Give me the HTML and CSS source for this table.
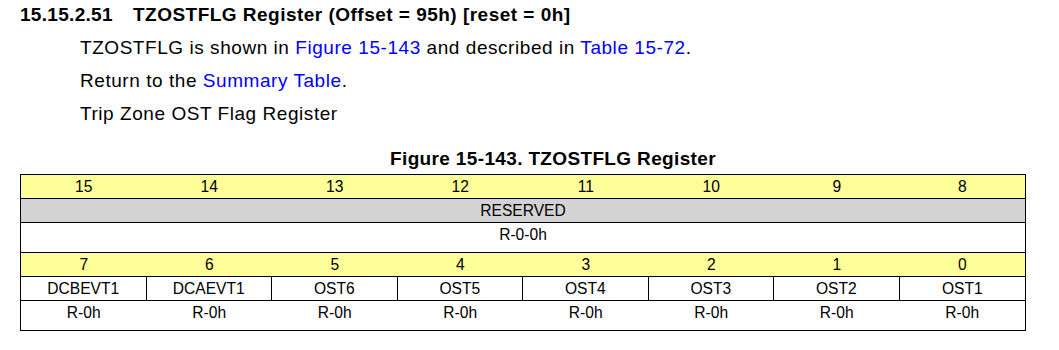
FILE: index.html
```
<!DOCTYPE html>
<html>
<head>
<meta charset="utf-8">
<link rel="stylesheet" href="styles.css">
</head>
<body>
<div class="doc">
  <h2 class="heading"><span class="secnum">15.15.2.51</span><span class="sectitle">TZOSTFLG Register (Offset = 95h) [reset = 0h]</span></h2>
  <div class="content">
    <p class="line">TZOSTFLG is shown in <a class="link">Figure 15-143</a> and described in <a class="link">Table 15-72</a>.</p>
    <p class="line">Return to the <a class="link">Summary Table</a>.</p>
    <p class="line">Trip Zone OST Flag Register</p>
  </div>
  <div class="figure">
    <div class="caption">Figure 15-143. TZOSTFLG Register</div>
    <div class="reg">
      <div class="row bits">
        <div class="cell">15</div><div class="cell">14</div><div class="cell">13</div><div class="cell">12</div>
        <div class="cell">11</div><div class="cell">10</div><div class="cell">9</div><div class="cell">8</div>
      </div>
      <div class="row reserved">
        <div class="cell span8">RESERVED</div>
      </div>
      <div class="row access tall">
        <div class="cell span8">R-0-0h</div>
      </div>
      <div class="row bits">
        <div class="cell">7</div><div class="cell">6</div><div class="cell">5</div><div class="cell">4</div>
        <div class="cell">3</div><div class="cell">2</div><div class="cell">1</div><div class="cell">0</div>
      </div>
      <div class="row names">
        <div class="cell">DCBEVT1</div><div class="cell">DCAEVT1</div><div class="cell">OST6</div><div class="cell">OST5</div>
        <div class="cell">OST4</div><div class="cell">OST3</div><div class="cell">OST2</div><div class="cell">OST1</div>
      </div>
      <div class="row access tall last">
        <div class="cell">R-0h</div><div class="cell">R-0h</div><div class="cell">R-0h</div><div class="cell">R-0h</div>
        <div class="cell">R-0h</div><div class="cell">R-0h</div><div class="cell">R-0h</div><div class="cell">R-0h</div>
      </div>
    </div>
  </div>
</div>
</body>
</html>
```

FILE: styles.css
```
html, body {
  margin: 0;
  padding: 0;
  background: #ffffff;
}

body {
  font-family: "Liberation Sans", Arial, sans-serif;
  color: #000000;
}

.doc {
  padding: 3px 0 0 20px;
  width: 1006px;
}

.heading {
  margin: 0;
  font-size: 19px;
  font-weight: bold;
  line-height: 24px;
  letter-spacing: 0.48px;
  display: flex;
}

.secnum {
  width: 113px;
  letter-spacing: 0.3px;
}

.content {
  margin: 4px 0 0 60px;
}

.line {
  margin: 0;
  font-size: 19px;
  line-height: 33px;
  letter-spacing: 0.55px;
}

.link {
  color: #0000ff;
  text-decoration: none;
}

.figure {
  margin-top: 17px;
}

.caption {
  padding-left: 60px;
  text-align: center;
  font-size: 19px;
  font-weight: bold;
  line-height: 24px;
  letter-spacing: 0.35px;
}

.reg {
  margin-top: 3px;
  border: 1px solid #000000;
  font-size: 15.6px;
  letter-spacing: 0;
}

.row {
  display: grid;
  grid-template-columns: repeat(8, 1fr);
  height: 23px;
  border-bottom: 1px solid #000000;
}

.row.tall {
  height: 29px;
}

.row.last {
  border-bottom: none;
}

.cell {
  text-align: center;
  line-height: 23px;
  white-space: nowrap;
}

.span8 {
  grid-column: 1 / span 8;
}

.bits {
  background: #ffff99;
}

.reserved {
  background: #d3d3d3;
}

.names .cell {
  border-right: 1px solid #000000;
}

.names .cell:last-child {
  border-right: none;
}
```
